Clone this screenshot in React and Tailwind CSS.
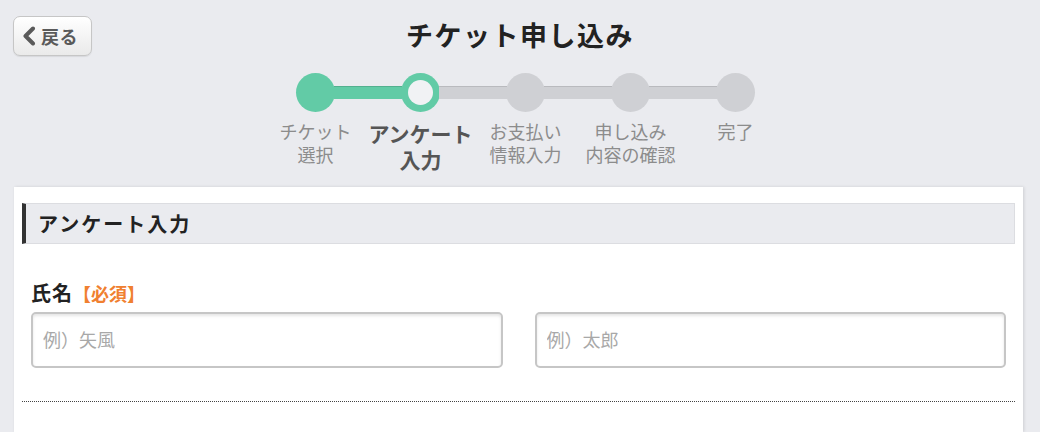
import React from 'react';

const font = { fontFamily: '"Noto Sans CJK JP", "Noto Sans", sans-serif' };

const steps = [
    { lines: ['チケット', '選択'], state: 'done' },
    { lines: ['アンケート', '入力'], state: 'current' },
    { lines: ['お支払い', '情報入力'], state: 'todo' },
    { lines: ['申し込み', '内容の確認'], state: 'todo' },
    { lines: ['完了'], state: 'todo' },
];

const Step = ({ step, index }) => {
    const first = index === 0;
    const last = index === steps.length - 1;
    // bar colour on each side of the circle
    const leftGreen = index <= 1;
    const rightGreen = index === 0;

    return (
        <div className="flex flex-col items-center w-[105px]">
            <div className="flex items-center w-full h-[39px]">
                <div
                    className={
                        'flex-1 h-[13px] ' +
                        (first ? 'bg-transparent' : leftGreen ? 'bg-[#62cba6] border-t border-[#53b08f]' : 'bg-[#cfd0d4] border-t border-[#b9babe]')
                    }
                />
                {step.state === 'current' ? (
                    <div className="w-[39px] h-[39px] rounded-full bg-[#62cba6] flex items-center justify-center -mx-px">
                        <div className="w-[25px] h-[25px] rounded-full bg-[#f1f2f4]" />
                    </div>
                ) : (
                    <div
                        className={
                            'w-[39px] h-[39px] rounded-full -mx-px ' +
                            (step.state === 'done' ? 'bg-[#62cba6]' : 'bg-[#cfd0d4]')
                        }
                    />
                )}
                <div
                    className={
                        'flex-1 h-[13px] ' +
                        (last ? 'bg-transparent' : rightGreen ? 'bg-[#62cba6] border-t border-[#53b08f]' : 'bg-[#cfd0d4] border-t border-[#b9babe]')
                    }
                />
            </div>
            <p
                className={
                    'mt-[8px] text-center whitespace-nowrap ' +
                    (step.state === 'current'
                        ? 'text-[21px] leading-[26px] font-bold text-[#555555]'
                        : 'text-[18px] leading-[23px] text-[#8c8c8c]')
                }
            >
                {step.lines[0]}
                {step.lines[1] && (
                    <>
                        <br />
                        {step.lines[1]}
                    </>
                )}
            </p>
        </div>
    );
};

const App = () => {
    return (
        <div className="w-[1040px] h-[432px] overflow-hidden bg-[#eaebef]" style={font}>
            {/* Header */}
            <div className="grid grid-cols-[1fr_auto_1fr] items-center pt-4 h-[56px]">
                <div className="pl-[13px]">
                    <button className="flex items-center gap-[5px] w-[79px] h-[40px] pl-[8px] rounded-[7px] border border-[#c6c6c6] bg-linear-to-b from-white to-[#eaeaea] shadow-[0_1px_1px_rgba(0,0,0,0.08)]">
                        <svg width="14" height="20" viewBox="0 0 14 20">
                            <polyline points="11,2.5 3.5,10 11,17.5" fill="none" stroke="#5a5a5a" strokeWidth="4" strokeLinecap="round" strokeLinejoin="round" />
                        </svg>
                        <span className="text-[18px] font-bold text-[#5a5a5a] leading-none tracking-[0.5px]">戻る</span>
                    </button>
                </div>
                <h1 className="text-[27px] font-bold text-[#222222] tracking-[1.5px] leading-none -mt-[4px]">チケット申し込み</h1>
                <div />
            </div>

            {/* Stepper */}
            <div className="h-[131px] pt-[17px]">
                <div className="flex ml-[263px]">
                    {steps.map((s, i) => (
                        <Step key={i} step={s} index={i} />
                    ))}
                </div>
            </div>

            {/* Card */}
            <div className="ml-[14px] w-[1009px] h-[245px] bg-white shadow-[1px_0_3px_rgba(0,0,0,0.12)] pt-4 px-[8px]">
                <div className="h-[41px] flex items-center bg-[#eaebef] border border-[#dcdde1] border-l-4 border-l-[#333333] pl-[12px]">
                    <span className="text-[20px] font-bold text-[#222222] tracking-[2px]">アンケート入力</span>
                </div>

                <div className="px-[9px]">
                    <div className="mt-[35px] text-[20px] leading-[28px] font-bold text-[#222222] tracking-[1px]">
                        氏名<span className="text-[#f08030] text-[18px] tracking-normal">【必須】</span>
                    </div>
                    <div className="mt-[5px] grid grid-cols-2 gap-[32px]">
                        <input
                            type="text"
                            placeholder="例）矢風"
                            className="h-[56px] rounded-[5px] border-2 border-[#c6c6c6] bg-white pl-[10px] pb-[2px] text-[18px] placeholder:text-[#a8a8a8] shadow-[inset_0_2px_3px_rgba(0,0,0,0.1)] outline-none"
                        />
                        <input
                            type="text"
                            placeholder="例）太郎"
                            className="h-[56px] rounded-[5px] border-2 border-[#c6c6c6] bg-white pl-[10px] pb-[2px] text-[18px] placeholder:text-[#a8a8a8] shadow-[inset_0_2px_3px_rgba(0,0,0,0.1)] outline-none"
                        />
                    </div>
                </div>

                <div className="mt-[33px] border-t border-dotted border-[#444444]" />
            </div>
        </div>
    );
};

export default App;
